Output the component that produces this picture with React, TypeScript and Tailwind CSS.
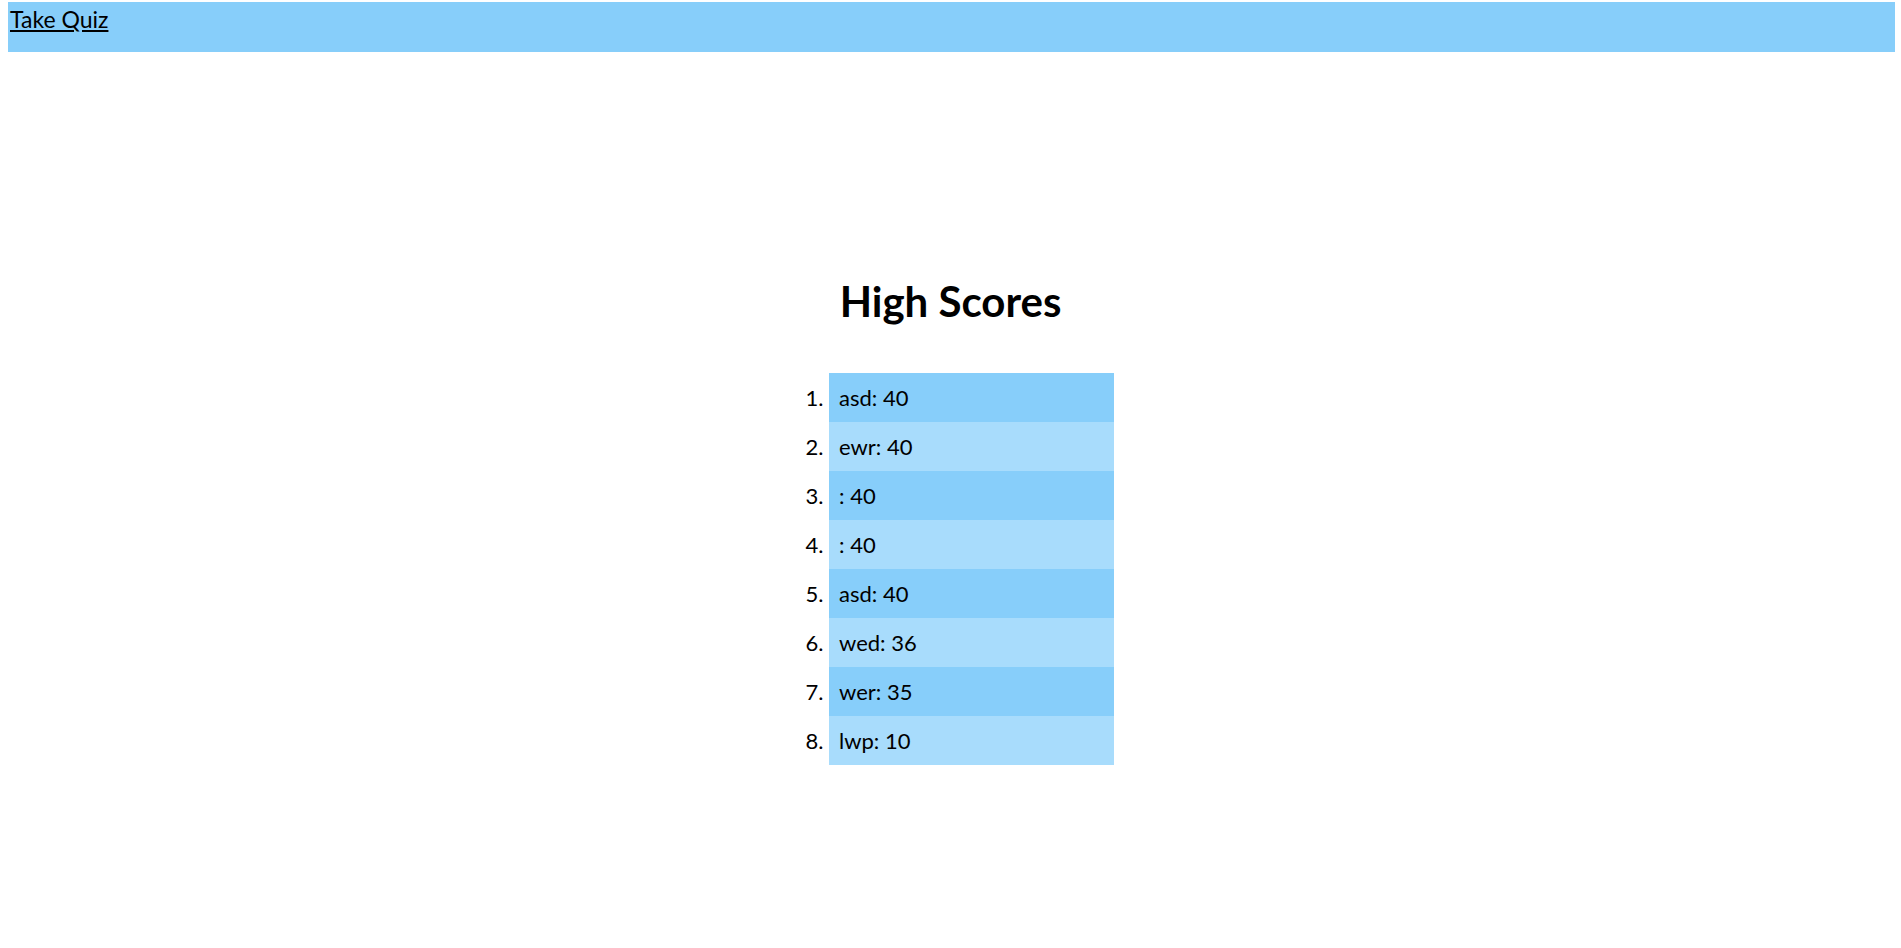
const scores = [
  { name: "asd", score: 40 },
  { name: "ewr", score: 40 },
  { name: "", score: 40 },
  { name: "", score: 40 },
  { name: "asd", score: 40 },
  { name: "wed", score: 36 },
  { name: "wer", score: 35 },
  { name: "lwp", score: 10 },
];

export default function App() {
  return (
    <div className="min-h-screen bg-white text-black font-['Lato',sans-serif]">
      <nav className="ml-[8px] mr-[6px] pt-[2px]">
        <div className="h-[50px] bg-[#87cefa] pl-[2px]">
          <a href="#" className="text-[23px] leading-[34px] underline">
            Take Quiz
          </a>
        </div>
      </nav>
      <main className="flex flex-col items-center pt-[225px]">
        <h1 className="text-[42px] font-bold leading-[48px]">High Scores</h1>
        <ol className="mt-[48px] ml-[42px] w-[285px] list-decimal pl-0 text-[22px]">
          {scores.map((s, i) => (
            <li
              key={i}
              className={`h-[49px] pl-[10px] leading-[49px] marker:text-black ${
                i % 2 === 0 ? "bg-[#87cefa]" : "bg-[#a8dcfc]"
              }`}
            >
              {s.name}: {s.score}
            </li>
          ))}
        </ol>
      </main>
    </div>
  );
}
